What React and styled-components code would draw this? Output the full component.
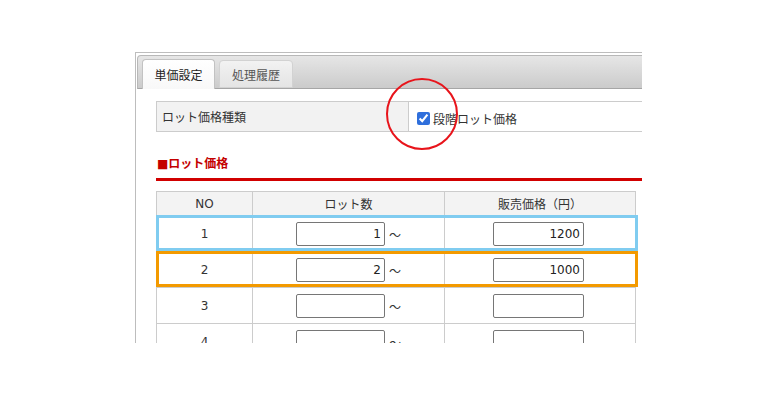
import React from 'react';
import styled, { createGlobalStyle } from 'styled-components';

const GlobalStyle = createGlobalStyle`
  html, body {
    margin: 0;
    background: #fff;
  }
  body {
    font-family: "DejaVu Sans", "Noto Sans CJK JP", sans-serif;
    font-size: 12px;
    color: #333;
  }
`;

const Stage = styled.div`
  padding: 52px 0 0 135px;
`;

const Clip = styled.div`
  position: relative;
  width: 507px;
  height: 291px;
  overflow: hidden;
`;

const Panel = styled.div`
  width: 700px;
  border: 1px solid #bdbdbd;
  padding: 2px 1px 0 1px;
  background: #fff;
`;

const TabBar = styled.div`
  display: flex;
  align-items: flex-end;
  gap: 4px;
  height: 32px;
  padding: 0 4px;
  border: 1px solid #b8b8b8;
  border-bottom-color: #a6a6a6;
  border-radius: 4px 4px 0 0;
  background: linear-gradient(#e6e6e6, #cbcbcb);
`;

const Tab = styled.div`
  display: flex;
  align-items: center;
  justify-content: center;
  box-sizing: border-box;
  width: ${p => (p.$active ? '73px' : '74px')};
  height: ${p => (p.$active ? '30px' : '28px')};
  margin-bottom: ${p => (p.$active ? '-1px' : '0')};
  border: 1px solid ${p => (p.$active ? '#c2c2c2' : '#d2d2d2')};
  border-bottom: ${p => (p.$active ? 'none' : '1px solid #d2d2d2')};
  border-radius: 4px 4px 0 0;
  background: ${p => (p.$active ? 'linear-gradient(#ffffff, #f8f8f8)' : 'linear-gradient(#f2f2f2, #e4e4e4)')};
  color: ${p => (p.$active ? '#222' : '#555')};
  font-family: "Noto Sans CJK JP", sans-serif;
  font-size: 12px;
  padding-bottom: ${p => (p.$active ? '1px' : '0')};
`;

const Body = styled.div`
  padding: 12px 0 0 19px;
`;

const SettingRow = styled.div`
  display: grid;
  grid-template-columns: 252px 1fr;
  width: 620px;
  height: 31px;
  box-sizing: border-box;
  border-top: 1px solid #ccc;
  border-bottom: 1px solid #ccc;
  border-left: 1px solid #ccc;
`;

const SettingLabel = styled.div`
  display: flex;
  align-items: center;
  padding-left: 5px;
  background: #f2f2f2;
  border-right: 1px solid #ccc;
  font-family: "Noto Sans CJK JP", sans-serif;
  color: #333;
`;

const SettingValue = styled.div`
  display: flex;
  align-items: center;
  padding: 3px 0 0 5px;
  font-family: "Noto Sans CJK JP", sans-serif;
  color: #333;
`;

const Check = styled.input`
  width: 13px;
  height: 13px;
  margin: 0 3px 0 3px;
  accent-color: #2f6fdc;
`;

const Heading = styled.div`
  width: 620px;
  margin-top: 22px;
  line-height: 20px;
  padding-bottom: 4px;
  border-bottom: 3px solid #d10000;
  color: #c40000;
  font-weight: bold;
  font-family: "DejaVu Sans", "Noto Sans CJK JP", sans-serif;
  font-size: 12px;
  padding-left: 1px;
`;

const Table = styled.div`
  width: 479px;
  margin-top: 10px;
  border-top: 1px solid #ccc;
  border-left: 1px solid #ccc;
`;

const Row = styled.div`
  position: relative;
  display: grid;
  grid-template-columns: 96px 192px 191px;

  ${p => p.$mark && `
    &::after {
      content: '';
      position: absolute;
      left: -1px;
      top: -1px;
      width: 482px;
      height: 36px;
      box-sizing: border-box;
      border: 3px solid ${p.$mark};
      pointer-events: none;
    }
  `}
`;

const HeadCell = styled.div`
  display: flex;
  align-items: center;
  justify-content: center;
  height: 23px;
  background: #f3f3f3;
  border-right: 1px solid #ccc;
  border-bottom: 1px solid #ccc;
  color: #333;
  font-family: "DejaVu Sans", "Noto Sans CJK JP", sans-serif;
`;

const Cell = styled.div`
  display: flex;
  align-items: center;
  justify-content: center;
  height: 35px;
  border-right: 1px solid #ccc;
  border-bottom: 1px solid #ccc;
  color: #333;
`;

const NumInput = styled.input`
  box-sizing: border-box;
  width: ${p => p.$w}px;
  height: 24px;
  margin: 1px ${p => p.$mr || 0}px 0 0;
  padding: 0 3px;
  border: 1px solid #767676;
  border-radius: 2px;
  text-align: right;
  font-family: "DejaVu Sans", sans-serif;
  font-size: 12px;
  color: #222;
  background: #fff;
  outline: none;
`;

const Tilde = styled.span`
  margin-left: 4px;
  margin-top: 1px;
  font-family: "Noto Sans CJK JP", sans-serif;
  font-size: 12px;
  color: #333;
`;

const RedCircle = styled.div`
  position: absolute;
  left: 251px;
  top: 26px;
  width: 72px;
  height: 72px;
  box-sizing: border-box;
  border: 2px solid #e8141b;
  border-radius: 50%;
  pointer-events: none;
`;

const rows = [
  { no: 1, lot: '1', price: '1200', mark: '#80ccf0' },
  { no: 2, lot: '2', price: '1000', mark: '#f39a00' },
  { no: 3, lot: '', price: '' },
  { no: 4, lot: '', price: '' },
];

export default function App() {
  return (
    <>
      <GlobalStyle />
      <Stage>
        <Clip>
          <Panel>
            <TabBar>
              <Tab $active>単価設定</Tab>
              <Tab>処理履歴</Tab>
            </TabBar>
            <Body>
              <SettingRow>
                <SettingLabel>ロット価格種類</SettingLabel>
                <SettingValue>
                  <Check type="checkbox" defaultChecked />
                  段階ロット価格
                </SettingValue>
              </SettingRow>

              <Heading>■ロット価格</Heading>

              <Table>
                <Row>
                  <HeadCell>NO</HeadCell>
                  <HeadCell>ロット数</HeadCell>
                  <HeadCell>販売価格（円）</HeadCell>
                </Row>
                {rows.map(r => (
                  <Row key={r.no} $mark={r.mark}>
                    <Cell>{r.no}</Cell>
                    <Cell>
                      <NumInput $w={89} defaultValue={r.lot} readOnly />
                      <Tilde>～</Tilde>
                    </Cell>
                    <Cell>
                      <NumInput $w={91} $mr={3} defaultValue={r.price} readOnly />
                    </Cell>
                  </Row>
                ))}
              </Table>
            </Body>
          </Panel>
          <RedCircle />
        </Clip>
      </Stage>
    </>
  );
}
